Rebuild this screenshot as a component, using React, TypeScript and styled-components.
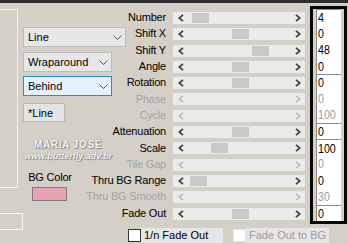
import { Fragment } from 'react';
import styled, { createGlobalStyle } from 'styled-components';

const GlobalStyle = createGlobalStyle`
  html, body { margin: 0; padding: 0; background: #d4d0c8; }
  body { font-family: "Liberation Sans", Arial, sans-serif; }
`;

const Window = styled.div`
  width: 348px;
  height: 244px;
  box-sizing: border-box;
  border-top: 3px solid #2e2e2e;
  background: #d4d0c8;
  display: flex;
  overflow: hidden;
  font-size: 11px;
  color: #000;
`;

const EdgeColumn = styled.div`
  width: 23px;
  flex: none;
  display: flex;
  flex-direction: column;
`;

const GroupEdge = styled.div`
  margin-top: 6px;
  width: 18px;
  height: 179px;
  box-sizing: border-box;
  border: 1px solid #f4f3f0;
  border-left: none;
`;

const Stub = styled.div`
  margin-top: 25px;
  width: 23px;
  height: 17px;
  box-sizing: border-box;
  border: 1px solid #f7f7f7;
  border-left: none;
`;

const LeftColumn = styled.div`
  width: 102px;
  flex: none;
  display: flex;
  flex-direction: column;
  padding-top: 24px;
`;

const Select = styled.div<{ $width: number; $active?: boolean; $gap?: number }>`
  width: ${(p) => p.$width}px;
  height: 20px;
  margin-top: ${(p) => p.$gap ?? 0}px;
  box-sizing: border-box;
  border: 1px solid ${(p) => (p.$active ? '#2f86dc' : '#bdbdbd')};
  background: ${(p) => (p.$active ? '#e5f1fb' : '#e7e7e7')};
  display: flex;
  align-items: center;
  justify-content: space-between;
  padding: 0 3px 0 4px;
`;

const NameBox = styled.div`
  margin-top: 7px;
  width: 42px;
  height: 19px;
  box-sizing: border-box;
  border: 1px solid #b8b8b8;
  background: #e4e4e4;
  display: flex;
  align-items: center;
  padding-left: 4px;
`;

const Watermark = styled.div`
  margin: 16px 0 0 -1px;
  width: 92px;
  text-align: center;
  color: #f6f6f6;
  text-shadow: 0 0 1px #6f6f6f, 1px 1px 1px #8a8a8a;
`;

const WatermarkTitle = styled.div`
  font-size: 10px;
  font-weight: bold;
  letter-spacing: 0.6px;
  line-height: 13px;
`;

const WatermarkUrl = styled.div`
  font-size: 9px;
  font-weight: bold;
  font-style: italic;
  line-height: 10px;
`;

const ColorLabel = styled.div`
  margin-top: 10px;
  width: 54px;
  text-align: center;
  line-height: 12px;
  letter-spacing: -0.2px;
`;

const Swatch = styled.div`
  margin: 4px 0 0 9px;
  width: 35px;
  height: 14px;
  box-sizing: border-box;
  border: 1px solid #7d7d7d;
  background: #e8a3b2;
`;

const RightArea = styled.div`
  flex: 1;
  display: flex;
  flex-direction: column;
`;

const SliderBlock = styled.div`
  display: flex;
  padding-top: 3px;
`;

const SliderGrid = styled.div`
  width: 185px;
  margin-top: 3px;
  display: grid;
  grid-template-columns: 41px 132px;
  grid-auto-rows: 16.3px;
  column-gap: 7px;
`;

const Label = styled.div<{ $disabled?: boolean }>`
  display: flex;
  justify-content: flex-end;
  align-items: center;
  white-space: nowrap;
  letter-spacing: -0.2px;
  color: ${(p) => (p.$disabled ? '#a4a4a4' : '#000')};
`;

const Track = styled.div`
  position: relative;
  margin-top: 3px;
  height: 12px;
  background: #ebebeb;
  display: flex;
  align-items: center;
  justify-content: space-between;
  padding: 0 4px 0 5px;
`;

const Thumb = styled.div<{ $at: number }>`
  position: absolute;
  top: 1px;
  left: ${(p) => p.$at}px;
  width: 17px;
  height: 10px;
  background: #c9c9c9;
`;

const ValueFrame = styled.div`
  width: 37px;
  height: 218px;
  box-sizing: border-box;
  border: 3px solid #080808;
  padding: 0 3px;
  display: grid;
  grid-auto-rows: 16.3px;
`;

const ValueCell = styled.div<{ $disabled?: boolean; $top?: boolean }>`
  background: #fff;
  border-left: 1px solid #8c8c8c;
  border-top: ${(p) => (p.$top ? '1px solid #8c8c8c' : 'none')};
  padding-left: 1px;
  display: flex;
  align-items: center;
  font-size: 13px;
  color: ${(p) => (p.$disabled ? '#9c9c9c' : '#000')};
`;

const Digits = styled.span`
  display: inline-block;
  transform: scaleX(0.82);
  transform-origin: left center;
`;

const CheckRow = styled.div`
  margin-top: 4px;
  padding-left: 3px;
  display: flex;
  align-items: center;
  gap: 10px;
  height: 15px;
`;

const CheckItem = styled.div`
  display: flex;
  align-items: center;
`;

const CheckBox = styled.div<{ $disabled?: boolean }>`
  width: 13px;
  height: 13px;
  box-sizing: border-box;
  background: #fff;
  border: 1px solid ${(p) => (p.$disabled ? '#e2e2e2' : '#333')};
`;

const CheckLabel = styled.div<{ $disabled?: boolean; $width: number }>`
  width: ${(p) => p.$width}px;
  height: 15px;
  box-sizing: border-box;
  background: #e6e6e6;
  padding-left: 3px;
  line-height: 15px;
  white-space: nowrap;
  color: ${(p) => (p.$disabled ? '#9c9c9c' : '#000')};
`;

const Chevron = () => (
  <svg width="9" height="5" viewBox="0 0 9 5">
    <polyline points="0.5,0.5 4.5,4.5 8.5,0.5" fill="none" stroke="#555" strokeWidth="1" />
  </svg>
);

const Arrow = ({ dir, off }: { dir: 'left' | 'right'; off?: boolean }) => (
  <svg width="6" height="8" viewBox="0 0 6 8">
    <polyline
      points={dir === 'left' ? '5,0.8 1.2,4 5,7.2' : '1,0.8 4.8,4 1,7.2'}
      fill="none"
      stroke={off ? '#bdbdbd' : '#3e3e3e'}
      strokeWidth="1.7"
    />
  </svg>
);

type Row = {
  label: string;
  value: string;
  thumb?: number;
  disabled?: boolean;
  top?: boolean;
};

const rows: Row[] = [
  { label: 'Number', value: '4', thumb: 19, top: true },
  { label: 'Shift X', value: '0', thumb: 59 },
  { label: 'Shift Y', value: '48', thumb: 79 },
  { label: 'Angle', value: '0', thumb: 59 },
  { label: 'Rotation', value: '0', thumb: 59, top: true },
  { label: 'Phase', value: '0', disabled: true },
  { label: 'Cycle', value: '100', disabled: true },
  { label: 'Attenuation', value: '0', thumb: 59, top: true },
  { label: 'Scale', value: '100', thumb: 38, top: true },
  { label: 'Tile Gap', value: '0', disabled: true },
  { label: 'Thru BG Range', value: '0', thumb: 17 },
  { label: 'Thru BG Smooth', value: '30', disabled: true },
  { label: 'Fade Out', value: '0', thumb: 59, top: true },
];

export default function App() {
  return (
    <>
      <GlobalStyle />
      <Window>
        <EdgeColumn>
          <GroupEdge />
          <Stub />
        </EdgeColumn>

        <LeftColumn>
          <Select $width={103}>
            Line
            <Chevron />
          </Select>
          <Select $width={89} $gap={5}>
            Wraparound
            <Chevron />
          </Select>
          <Select $width={89} $gap={4} $active>
            Behind
            <Chevron />
          </Select>
          <NameBox>*Line</NameBox>
          <Watermark>
            <WatermarkTitle>MARIA JOSÉ</WatermarkTitle>
            <WatermarkUrl>www.butterfly.adv.br</WatermarkUrl>
          </Watermark>
          <ColorLabel>BG Color</ColorLabel>
          <Swatch />
        </LeftColumn>

        <RightArea>
          <SliderBlock>
            <SliderGrid>
              {rows.map((r) => (
                <Fragment key={r.label}>
                  <Label $disabled={r.disabled}>{r.label}</Label>
                  <Track>
                    <Arrow dir="left" off={r.disabled} />
                    {r.thumb !== undefined && <Thumb $at={r.thumb} />}
                    <Arrow dir="right" off={r.disabled} />
                  </Track>
                </Fragment>
              ))}
            </SliderGrid>
            <ValueFrame>
              {rows.map((r) => (
                <ValueCell key={r.label} $disabled={r.disabled} $top={r.top}>
                  <Digits>{r.value}</Digits>
                </ValueCell>
              ))}
            </ValueFrame>
          </SliderBlock>
          <CheckRow>
            <CheckItem>
              <CheckBox />
              <CheckLabel $width={82}>1/n Fade Out</CheckLabel>
            </CheckItem>
            <CheckItem>
              <CheckBox $disabled />
              <CheckLabel $width={83} $disabled>
                Fade Out to BG
              </CheckLabel>
            </CheckItem>
          </CheckRow>
        </RightArea>
      </Window>
    </>
  );
}
